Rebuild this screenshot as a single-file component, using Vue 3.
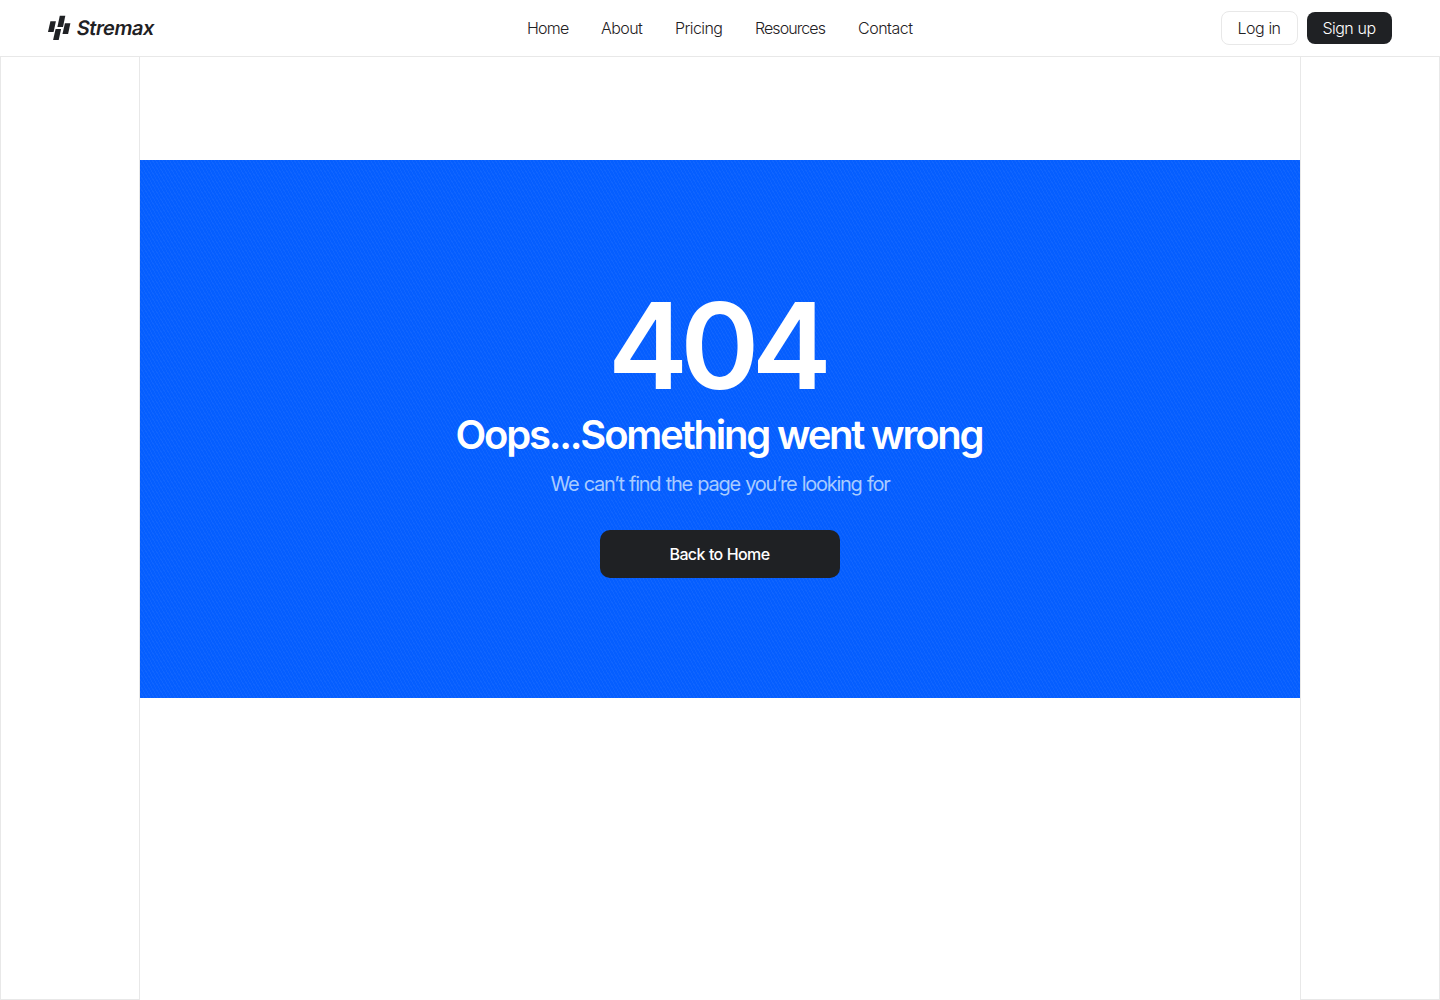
<script setup>
const links = [
  { label: 'Home', width: 42, spacing: -0.75 },
  { label: 'About', width: 42, spacing: -0.55 },
  { label: 'Pricing', width: 48, spacing: -0.6 },
  { label: 'Resources', width: 71, spacing: -0.93 },
  { label: 'Contact', width: 55, spacing: -0.5 },
];
</script>

<template>
  <div class="page">
    <header class="header">
      <a class="logo">
        <svg class="mark" width="24" height="26" viewBox="0 0 24 26" fill="#1f2124">
          <path d="M11.8.7h5.5L15 12H9.4z" />
          <path d="M2.4 6.3h5.5L5.6 17H0z" />
          <path d="M16.9 8.2h5.5L20.1 19h-5.6z" />
          <path d="M7.6 14.1h5.5L10.7 25H5.1z" />
        </svg>
        <span class="brand">Stremax</span>
      </a>
      <nav class="nav">
        <a
          v-for="link in links"
          :key="link.label"
          :style="{ width: link.width + 'px', letterSpacing: link.spacing + 'px' }"
        >{{ link.label }}</a>
      </nav>
      <div class="actions">
        <button class="login">Log in</button>
        <button class="signup">Sign up</button>
      </div>
    </header>
    <main class="body">
      <aside class="side"></aside>
      <div class="center">
        <section class="hero">
          <h1>404</h1>
          <h2>Oops...Something went wrong</h2>
          <p>We can’t find the page you’re looking for</p>
          <button class="back">Back to Home</button>
        </section>
      </div>
      <aside class="side"></aside>
    </main>
  </div>
</template>

<style>
body {
  margin: 0;
  background: #fff;
}
</style>

<style scoped>
* {
  box-sizing: border-box;
}

.page {
  height: 1000px;
  display: flex;
  flex-direction: column;
  font-family: Inter, "Liberation Sans", sans-serif;
  color: #1f2124;
  overflow: hidden;
}

.header {
  height: 56px;
  flex: none;
  padding: 0 48px;
  display: grid;
  grid-template-columns: 1fr auto 1fr;
  align-items: center;
}

.logo {
  display: flex;
  align-items: center;
  gap: 5px;
}

/* upright letters slanted, so the "a" keeps its double-storey form */
.brand {
  font-size: 20px;
  font-weight: 600;
  letter-spacing: -0.43px;
  transform: skewX(-10deg);
}

.nav {
  display: flex;
  gap: 32px;
  font-size: 16px;
  font-weight: 300;
}

.nav a {
  white-space: nowrap;
}

.actions {
  display: flex;
  align-items: center;
  justify-content: flex-end;
  gap: 9px;
}

button {
  font-family: inherit;
  border: 0;
  padding: 0;
}

.login,
.signup {
  font-size: 16px;
  font-weight: 300;
  letter-spacing: -0.6px;
  word-spacing: 0.6px;
  border-radius: 8px;
}

.login {
  width: 77px;
  height: 34px;
  padding-right: 1px;
  border: 1px solid #e8e8e8;
  background: #fff;
  color: #1f2124;
}

.signup {
  width: 85px;
  height: 32px;
  padding-right: 1px;
  background: #1f2124;
  color: #fff;
}

.body {
  flex: 1;
  display: grid;
  grid-template-columns: 140px 1160px 140px;
}

.side {
  border: 1px solid #e8e8e8;
}

.center {
  padding-top: 103px;
  border-top: 1px solid #e8e8e8;
}

.hero {
  height: 538px;
  padding-top: 126px;
  display: flex;
  flex-direction: column;
  align-items: center;
  background:
    repeating-linear-gradient(60deg, rgba(255, 255, 255, 0.045) 0 1px, transparent 1px 3px),
    #055eff;
  color: #fff;
}

h1 {
  margin: 0 8px 0 0;
  font-size: 120px;
  font-weight: 600;
  line-height: 120px;
  letter-spacing: -7.6px;
}

h2 {
  margin: 5px 2px 0 0;
  font-size: 40px;
  font-weight: 600;
  line-height: 48px;
  letter-spacing: -2.22px;
}

p {
  margin: 11px 0 0;
  font-size: 20px;
  font-weight: 400;
  line-height: 28px;
  letter-spacing: -1.26px;
  word-spacing: 1px;
  color: #a8cbff;
}

.back {
  margin-top: 32px;
  padding-right: 1px;
  width: 240px;
  height: 48px;
  border-radius: 10px;
  background: #1f2124;
  color: #fff;
  font-size: 16px;
  font-weight: 500;
  letter-spacing: -0.65px;
  word-spacing: 0.6px;
}
</style>
